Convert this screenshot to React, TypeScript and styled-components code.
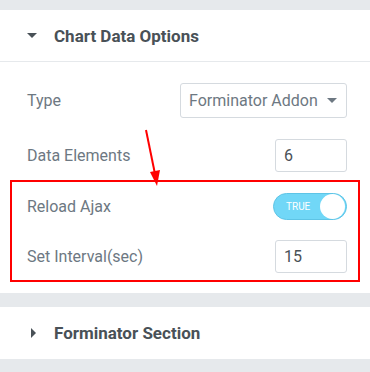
import { createGlobalStyle, styled } from "styled-components";

const GlobalStyle = createGlobalStyle`
    body {
        margin: 0;
        background-color: #e6e9ec;
        font-family: Roboto, "Liberation Sans", sans-serif;
    }
`;

const Page = styled.div`
    display: flex;
    flex-direction: column;
    padding-top: 10px;
    gap: 14px;
`;

const Section = styled.div`
    background-color: #ffffff;
    position: relative;
`;

const SectionHeader = styled.div<{ $open?: boolean }>`
    display: flex;
    align-items: center;
    height: 52px;
    padding-left: 27px;
    box-sizing: border-box;
    border-bottom: ${(p) => (p.$open ? "1px solid #e6e9ec" : "none")};
    color: #495157;
    font-size: 17px;
    font-weight: 700;
`;

const Caret = styled.span<{ $open?: boolean }>`
    display: inline-block;
    width: 0;
    height: 0;
    margin-right: ${(p) => (p.$open ? "17px" : "18px")};
    margin-left: ${(p) => (p.$open ? "0" : "4px")};
    ${(p) =>
        p.$open
            ? `border-left: 5px solid transparent;
               border-right: 5px solid transparent;
               border-top: 5px solid #495157;`
            : `border-top: 5px solid transparent;
               border-bottom: 5px solid transparent;
               border-left: 5px solid #495157;`}
`;

const Body = styled.div`
    display: flex;
    flex-direction: column;
    padding: 21px 23px 11px 27px;
    gap: 21px;
`;

const Row = styled.div`
    display: flex;
    align-items: center;
    justify-content: space-between;
    color: #6d7882;
    font-size: 16px;
`;

const Highlight = styled.div`
    display: flex;
    flex-direction: column;
    gap: 20px;
    margin: -13px -13px 0 -17px;
    padding: 11px 11px 7px 15px;
    border: 2px solid #ff0000;
`;

const Select = styled.div`
    display: flex;
    align-items: center;
    justify-content: space-between;
    width: 167px;
    height: 35px;
    box-sizing: border-box;
    padding: 0 9px 0 8px;
    border: 1px solid #d5dadf;
    border-radius: 3px;
    color: #6d7882;
    font-size: 16px;
`;

const SelectCaret = styled.span`
    width: 0;
    height: 0;
    border-left: 5px solid transparent;
    border-right: 5px solid transparent;
    border-top: 5px solid #6d7882;
`;

const NumberBox = styled.div`
    display: flex;
    align-items: center;
    width: 72px;
    height: 33px;
    box-sizing: border-box;
    padding-left: 8px;
    border: 1px solid #d5dadf;
    border-radius: 3px;
    color: #495157;
    font-size: 16px;
`;

const Switch = styled.div`
    display: flex;
    align-items: center;
    justify-content: space-between;
    width: 74px;
    height: 27px;
    box-sizing: border-box;
    padding: 0 1px 0 12px;
    border-radius: 14px;
    background-color: #71d7f7;
    border: 1px solid #5ec4e6;
    span {
        color: #ffffff;
        font-size: 10px;
    }
`;

const Knob = styled.div`
    width: 25px;
    height: 25px;
    border-radius: 50%;
    background-color: #ffffff;
`;

const Pointer = styled.svg`
    position: absolute;
    left: 140px;
    top: 118px;
`;

const App = () => {
    return <Page>
        <GlobalStyle />
        <Section>
            <SectionHeader $open>
                <Caret $open />
                Chart Data Options
            </SectionHeader>
            <Body>
                <Row>
                    Type
                    <Select>
                        Forminator Addon
                        <SelectCaret />
                    </Select>
                </Row>
                <Row>
                    Data Elements
                    <NumberBox>6</NumberBox>
                </Row>
                <Highlight>
                    <Row>
                        Reload Ajax
                        <Switch>
                            <span>TRUE</span>
                            <Knob />
                        </Switch>
                    </Row>
                    <Row>
                        Set Interval(sec)
                        <NumberBox>15</NumberBox>
                    </Row>
                </Highlight>
            </Body>
            <Pointer width="30" height="62" viewBox="0 0 30 62">
                <line x1="6" y1="2" x2="15" y2="46" stroke="#ff0000" strokeWidth="2" />
                <polygon points="10,44 20,42 17,58" fill="#ff0000" />
            </Pointer>
        </Section>
        <Section>
            <SectionHeader>
                <Caret />
                Forminator Section
            </SectionHeader>
        </Section>
    </Page>
}

export default App;
